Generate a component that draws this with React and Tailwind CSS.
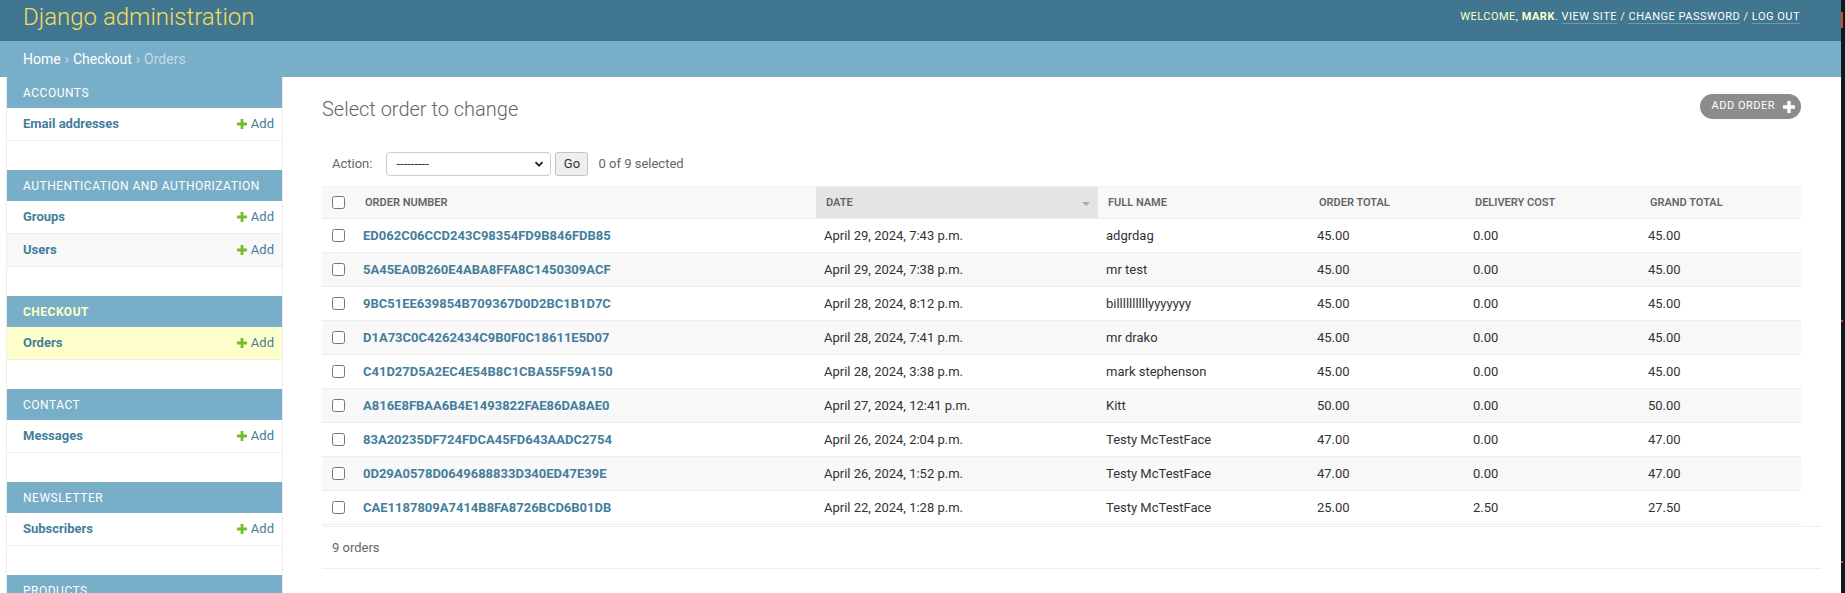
import React from 'react';

// Django admin – order changelist

const modules = [
  { name: 'Accounts', models: ['Email addresses'] },
  { name: 'Authentication and Authorization', models: ['Groups', 'Users'] },
  { name: 'Checkout', models: ['Orders'], current: true },
  { name: 'Contact', models: ['Messages'] },
  { name: 'Newsletter', models: ['Subscribers'] },
  { name: 'Products', models: ['Categories', 'Products'] },
];

const orders = [
  ['ED062C06CCD243C98354FD9B846FDB85', 'April 29, 2024, 7:43 p.m.', 'adgrdag', '45.00', '0.00', '45.00'],
  ['5A45EA0B260E4ABA8FFA8C1450309ACF', 'April 29, 2024, 7:38 p.m.', 'mr test', '45.00', '0.00', '45.00'],
  ['9BC51EE639854B709367D0D2BC1B1D7C', 'April 28, 2024, 8:12 p.m.', 'billllllllllyyyyyyy', '45.00', '0.00', '45.00'],
  ['D1A73C0C4262434C9B0F0C18611E5D07', 'April 28, 2024, 7:41 p.m.', 'mr drako', '45.00', '0.00', '45.00'],
  ['C41D27D5A2EC4E54B8C1CBA55F59A150', 'April 28, 2024, 3:38 p.m.', 'mark stephenson', '45.00', '0.00', '45.00'],
  ['A816E8FBAA6B4E1493822FAE86DA8AE0', 'April 27, 2024, 12:41 p.m.', 'Kitt', '50.00', '0.00', '50.00'],
  ['83A20235DF724FDCA45FD643AADC2754', 'April 26, 2024, 2:04 p.m.', 'Testy McTestFace', '47.00', '0.00', '47.00'],
  ['0D29A0578D0649688833D340ED47E39E', 'April 26, 2024, 1:52 p.m.', 'Testy McTestFace', '47.00', '0.00', '47.00'],
  ['CAE1187809A7414B8FA8726BCD6B01DB', 'April 22, 2024, 1:28 p.m.', 'Testy McTestFace', '25.00', '2.50', '27.50'],
];

const cols = 'grid grid-cols-[33px_461px_282px_211px_156px_175px_161px]';

function Plus({ color, size = 10 }) {
  return (
    <svg width={size} height={size} viewBox="0 0 10 10" className="shrink-0">
      <path d="M3.6 0h2.8v3.6H10v2.8H6.4V10H3.6V6.4H0V3.6h3.6z" fill={color} />
    </svg>
  );
}

function Sidebar() {
  return (
    <aside className="ml-[6px] w-[277px] shrink-0 border-x border-[#eee]">
      {modules.map((m) => (
        <div key={m.name} className="mb-[29px]">
          <div className={`h-[31px] flex items-center pl-4 bg-[#79aec8] text-[12px] uppercase tracking-[0.5px] ${m.current ? 'text-[#ffc] font-bold' : 'text-white'}`}>
            {m.name}
          </div>
          {m.models.map((model, i) => (
            <div
              key={model}
              className={`h-[33px] flex items-center justify-between pl-4 pr-[8px] border-b border-[#eee] text-[13px] ${
                m.current ? 'bg-[#ffc]' : i % 2 ? 'bg-[#f8f8f8]' : 'bg-white'
              }`}
            >
              <span className="font-bold text-[#447e9b]">{model}</span>
              <span className="flex items-center gap-[4px] text-[#447e9b]">
                <Plus color="#70bf2b" />
                Add
              </span>
            </div>
          ))}
        </div>
      ))}
    </aside>
  );
}

function Checkbox() {
  return <input type="checkbox" className="m-0 w-[13px] h-[13px]" />;
}

function Changelist() {
  const heads = ['Order number', 'Date', 'Full name', 'Order total', 'Delivery cost', 'Grand total'];
  return (
    <main className="flex-1 min-w-0 pl-[39px] pr-5 pt-[17px]">
      <div className="mr-5 h-[25px] flex items-center justify-between">
        <h1 className="mt-[5px] text-[20px] font-light text-[#666]">Select order to change</h1>
        <a className="h-[25px] flex items-center gap-[8px] pl-[12px] pr-[6px] rounded-full bg-[#8c8c8c] text-white text-[11px] uppercase tracking-[0.5px]">
          Add order
          <Plus color="#fff" size={12} />
        </a>
      </div>

      <div className="mt-[33px] h-[24px] flex items-center pl-[10px] text-[13px] text-[#666]">
        <span>Action:</span>
        <div className="ml-[14px] w-[165px] h-[24px] flex items-center justify-between pl-[9px] pr-[6px] border border-[#ccc] rounded-[4px] bg-white text-[#333]">
          <span>---------</span>
          <svg width="10" height="10" viewBox="0 0 10 10">
            <path d="M1.5 3.2 5 6.7l3.5-3.5" fill="none" stroke="#222" strokeWidth="1.8" />
          </svg>
        </div>
        <button className="ml-[4px] w-[33px] h-[24px] border border-[#c2c2c2] rounded-[3px] bg-[#efefef] text-[#333]">Go</button>
        <span className="ml-[10px]">0 of 9 selected</span>
      </div>

      <div className="mt-[10px] mr-5">
        <div className={`${cols} h-[33px] border-y border-[#eee] bg-[#f8f8f8] text-[11px] font-semibold uppercase text-[#666]`}>
          <div className="flex items-center pl-[10px]">
            <Checkbox />
          </div>
          {heads.map((h) => (
            <div
              key={h}
              className={`flex items-center justify-between px-[10px] pt-[2px] ${h === 'Date' ? 'bg-[#e4e4e4] pr-[8px]' : ''}`}
            >
              <span>{h}</span>
              {h === 'Date' && (
                <svg width="8" height="4" viewBox="0 0 8 4">
                  <path d="M0 0h8L4 4z" fill="#aaa" />
                </svg>
              )}
            </div>
          ))}
        </div>
        {orders.map((o, i) => (
          <div
            key={o[0]}
            className={`${cols} h-[34px] border-b border-[#eee] text-[13px] text-[#333] ${i % 2 ? 'bg-[#f8f8f8]' : 'bg-white'}`}
          >
            <div className="flex items-center pl-[10px]">
              <Checkbox />
            </div>
            <div className="flex items-center px-[8px] font-bold text-[#447e9b]">{o[0]}</div>
            {o.slice(1).map((v, j) => (
              <div key={j} className="flex items-center px-[8px]">
                {v}
              </div>
            ))}
          </div>
        ))}
      </div>

      <div className="mt-[1px] h-[43px] flex items-center pl-[10px] border-y border-[#eee] text-[13px] text-[#666]">
        9 orders
      </div>
    </main>
  );
}

export default function App() {
  return (
    <div className="h-[593px] overflow-hidden flex bg-white font-['Roboto','Liberation_Sans',sans-serif]">
      <div className="flex-1 min-w-0 flex flex-col">
        <header className="h-[41px] shrink-0 flex items-start justify-between pl-[23px] pr-[41px] bg-[#417690]">
          <div className="text-[24px] leading-[35px] font-light text-[#f5dd5d]">Django administration</div>
          <div className="mt-[8px] leading-[18px] text-[11px] uppercase tracking-[0.5px] text-[#ffc]">
            Welcome, <strong>Mark</strong>.{' '}
            <a className="text-white border-b border-white/25">View site</a> /{' '}
            <a className="text-white border-b border-white/25">Change password</a> /{' '}
            <a className="text-white border-b border-white/25">Log out</a>
          </div>
        </header>
        <nav className="h-[36px] shrink-0 flex items-center pl-[23px] bg-[#79aec8] text-[14px] text-[#c4dce8]">
          <a className="text-white">Home</a>
          <span className="mx-[4px]">›</span>
          <a className="text-white">Checkout</a>
          <span className="mx-[4px]">›</span>
          <span>Orders</span>
        </nav>
        <div className="flex-1 flex">
          <Sidebar />
          <Changelist />
        </div>
      </div>
      <div className="w-[4px] shrink-0 flex flex-col bg-[#0f181d]">
        <div className="mt-[12px] h-[16px] w-[2px] bg-[#c2541f]" />
        <div className="mt-[292px] h-[2px] w-[2px] bg-[#c2541f]" />
        <div className="mt-[239px] h-[2px] w-[2px] bg-[#c2541f]" />
      </div>
    </div>
  );
}
